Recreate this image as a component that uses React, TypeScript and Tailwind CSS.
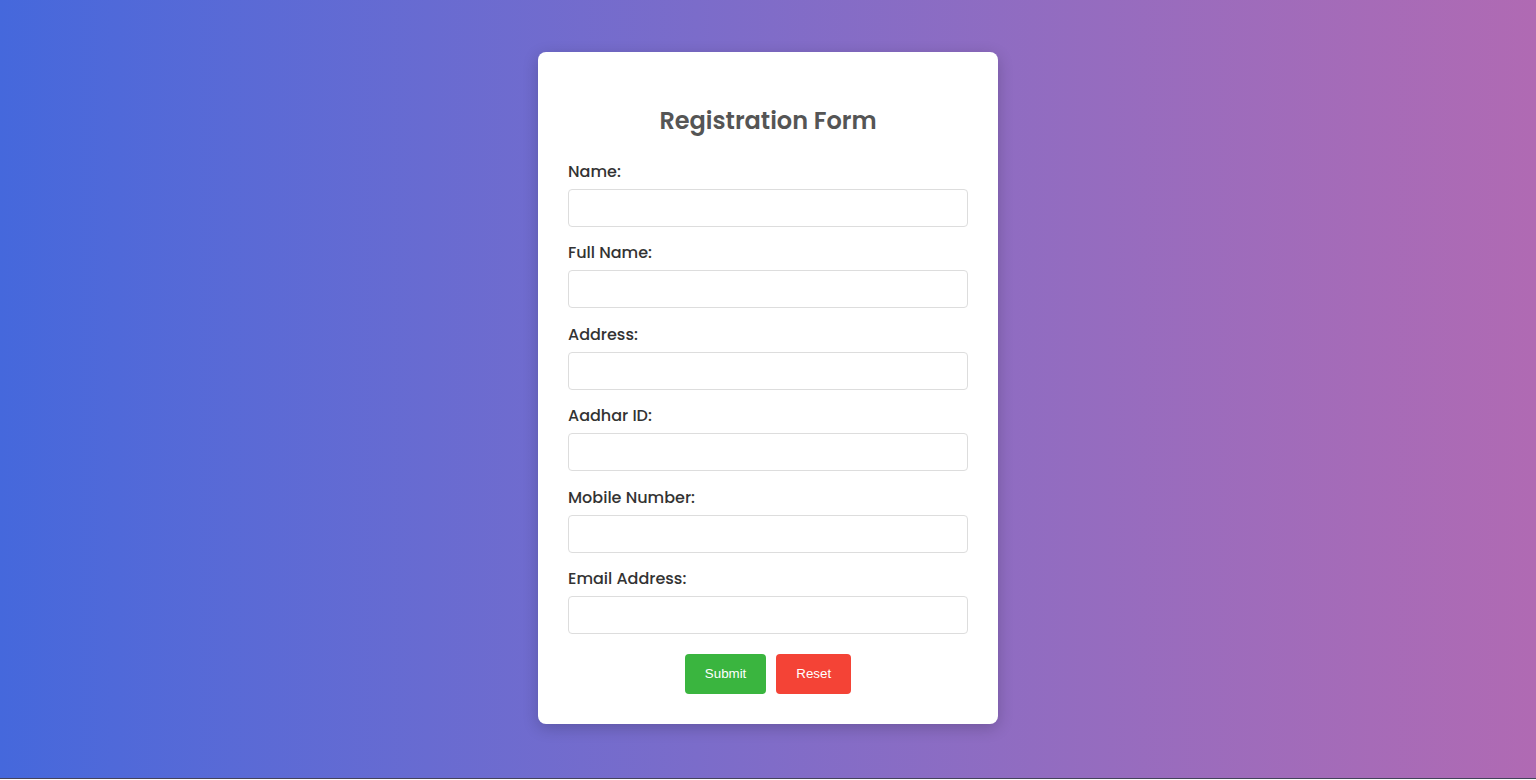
import React from 'react';

const fields = ['Name:', 'Full Name:', 'Address:', 'Aadhar ID:', 'Mobile Number:', 'Email Address:'];

export default function App() {
    return (
        <div className="w-full">
            <div className="h-[778px] bg-gradient-to-r from-[#4568dc] to-[#b06ab3] flex justify-center items-start pt-[52px] font-['Poppins','Inter',sans-serif]">
                <form
                    className="w-[460px] bg-white rounded-lg shadow-[0_4px_16px_rgba(0,0,0,0.2)] px-[30px] pt-[30px] pb-[30px]"
                    onSubmit={(e) => e.preventDefault()}
                >
                    <h2 className="text-center text-[24px] leading-[38px] font-semibold text-[#555] mt-[20px] mb-[19.5px]">
                        Registration Form
                    </h2>
                    {fields.map((f) => (
                        <div key={f} className="mb-[14.5px]">
                            <label className="block text-[16px] leading-[24px] font-medium text-[#333] mb-[5px]">{f}</label>
                            <input
                                type="text"
                                className="block w-full h-[38px] border border-[#ddd] rounded-[4px] px-2 outline-none"
                            />
                        </div>
                    ))}
                    <div className="flex justify-center gap-[10px] pt-[5.5px]">
                        <button
                            type="submit"
                            className="h-10 px-5 rounded-[4px] bg-[#3ab53f] text-white text-[13.33px] font-['Liberation_Sans',Arial,sans-serif]"
                        >
                            Submit
                        </button>
                        <button
                            type="reset"
                            className="h-10 px-5 rounded-[4px] bg-[#f44336] text-white text-[13.33px] font-['Liberation_Sans',Arial,sans-serif]"
                        >
                            Reset
                        </button>
                    </div>
                </form>
            </div>
            <div className="h-px bg-[#44445a]" />
        </div>
    );
}
